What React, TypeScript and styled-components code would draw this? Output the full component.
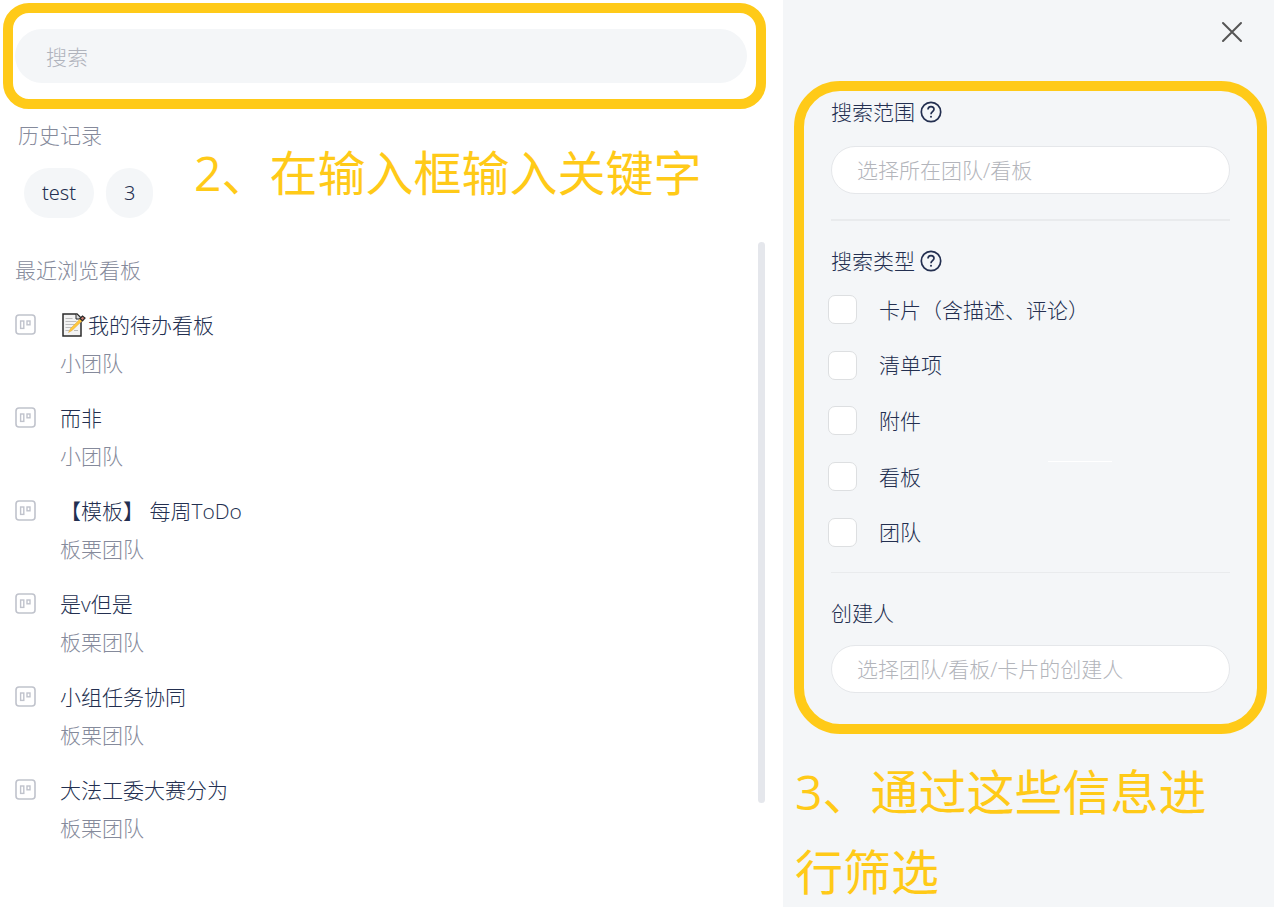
import React from "react";
import styled, { createGlobalStyle } from "styled-components";

const ink = "#232f50";
const muted = "#858a9b";
const surface = "#f4f6f8";
const accent = "#ffca18";

const GlobalStyle = createGlobalStyle`
  *, *::before, *::after { box-sizing: border-box; }
  body {
    margin: 0;
    background: #fff;
    color: ${ink};
    font-family: "Open Sans", "Noto Sans CJK SC", sans-serif;
    font-size: 21px;
    font-weight: 300;
    line-height: 30px;
  }
  button, input { font: inherit; color: inherit; }
`;

const Page = styled.div`
  display: grid;
  grid-template-columns: minmax(0, 1fr) 491px;
  min-height: calc(100vh - 3px);
  margin-bottom: 3px;
  overflow: hidden;
`;

const Main = styled.main`
  padding: 3px 17px 0 3px;
`;

const Aside = styled.aside`
  display: flex;
  flex-direction: column;
  padding: 16px 7px 0 11px;
  background: ${surface};
`;

const Highlight = styled.div<{ $radius: number; $padding: string }>`
  border: 10px solid ${accent};
  border-radius: ${(p) => p.$radius}px;
  padding: ${(p) => p.$padding};
`;

const SearchInput = styled.input`
  display: block;
  width: 100%;
  height: 54px;
  padding: 2px 31px 0;
  border: 0;
  border-radius: 27px;
  outline: none;
  background: ${surface};
  &::placeholder { color: #b0b3bc; opacity: 1; }
`;

const HistoryRow = styled.section`
  display: flex;
  padding: 11px 0 24px 15px;
`;

const History = styled.div`
  width: 176px;
  flex: none;
`;

const SectionTitle = styled.h2`
  margin: 0;
  font-size: 21px;
  font-weight: 300;
  color: ${muted};
`;

const Chips = styled.div`
  display: flex;
  gap: 12px;
  padding: 18px 0 0 6px;
`;

const Chip = styled.button`
  height: 50px;
  padding: 0 18px;
  border: 0;
  border-radius: 25px;
  background: ${surface};
  font-family: "Noto Sans", "Noto Sans CJK SC", sans-serif;
  font-size: 20px;
  cursor: pointer;
`;

const Note = styled.p<{ $margin: string }>`
  margin: ${(p) => p.$margin};
  color: ${accent};
  font-size: 48px;
  font-weight: 400;
  line-height: 80px;
`;

const Recent = styled.section`
  display: flex;
  justify-content: space-between;
  align-items: flex-start;
  padding: 0 1px 0 12px;
`;

const RecentBody = styled.div`
  padding-top: 13px;
`;

const BoardList = styled.ul`
  display: grid;
  gap: 17px;
  margin: 21px 0 0;
  padding: 0;
  list-style: none;
`;

const BoardLink = styled.a`
  display: grid;
  grid-template-columns: 21px 1fr;
  column-gap: 24px;
  line-height: 38px;
  color: ${ink};
  text-decoration: none;
  svg { display: block; }
`;

const IconCell = styled.span`
  padding-top: 8px;
`;

const BoardName = styled.span`
  display: flex;
  align-items: center;
`;

const TeamName = styled.span`
  grid-column: 2;
  color: ${muted};
`;

const ScrollThumb = styled.div`
  width: 7px;
  height: 561px;
  border-radius: 4px;
  background: #e5e7ec;
`;

const CloseButton = styled.button`
  align-self: flex-end;
  display: grid;
  place-items: center;
  width: 32px;
  height: 32px;
  margin: 0 19px 33px 0;
  padding: 0;
  border: 0;
  background: none;
  cursor: pointer;
`;

const FilterTitle = styled.div`
  display: flex;
  align-items: center;
  gap: 5px;
`;

const HelpButton = styled.button`
  display: block;
  padding: 0;
  border: 0;
  background: none;
  cursor: pointer;
  svg { display: block; }
`;

const FilterInput = styled.input`
  display: block;
  width: 100%;
  height: 48px;
  margin-top: ${(p) => (p.id === "scope" ? 19 : 17)}px;
  padding: 0 25px;
  border: 1px solid #e5e7ea;
  border-radius: 24px;
  outline: none;
  background: #fff;
  &::placeholder { color: #b3b5bb; opacity: 1; }
`;

const Divider = styled.hr<{ $margin: string; $size: number }>`
  height: ${(p) => p.$size}px;
  margin: ${(p) => p.$margin};
  border: 0;
  background: #e9ebed;
`;

const Options = styled.div`
  position: relative;
  display: grid;
  grid-auto-rows: 1fr;
  min-height: 278px;
  margin: 6px 0 0 -3px;
  &::after {
    content: "";
    position: absolute;
    top: 179px;
    right: 118px;
    width: 64px;
    height: 1px;
    background: #fff;
  }
`;

const Option = styled.label`
  display: flex;
  align-items: center;
  gap: 22px;
  cursor: pointer;
`;

const Checkbox = styled.input`
  appearance: none;
  width: 29px;
  height: 29px;
  margin: 0;
  border: 1px solid #dddfe1;
  border-radius: 7px;
  background: #fff;
  &:checked { background: ${accent}; }
`;

const BoardIcon = () => (
  <svg width="21" height="21" viewBox="0 0 21 21" fill="none" stroke="#c0c3cc">
    <rect x="1" y="1" width="19" height="19" rx="3" strokeWidth="1.6" />
    <rect x="5.600" y="7" width="3.200" height="7.400" strokeWidth="1.4" />
    <rect x="12" y="7" width="3" height="3.800" strokeWidth="1.4" />
  </svg>
);

const MemoIcon = () => (
  <svg width="28" height="28" viewBox="0 0 28 28" aria-label="memo">
    <path d="M3 3h14l4 4v18H3z" fill="#f3f3f3" stroke="#2b2b2b" strokeWidth="1.5" />
    <path d="M16 3v5h5" fill="#ddd" stroke="#2b2b2b" />
    <path d="M5.500 7.500h7M5.500 10.500h11M5.500 13.500h10M5.500 16.500h7M5.500 19.500h4M14 19.500h4" stroke="#bdbdbd" />
    <path d="M8.500 21.500l2-4L20.500 7.500l2 2L12 19.500z" fill="#ffc83d" stroke="#d9a441" strokeWidth=".5" />
    <path d="M20 7.500l2.500-2.500 2.500 2-2.500 2.800z" fill="#d67d6e" stroke="#2b2b2b" strokeWidth="1.2" />
  </svg>
);

const HelpIcon = () => (
  <svg width="22" height="22" viewBox="0 0 22 22" fill="none" stroke={ink} strokeWidth="1.7">
    <circle cx="11" cy="11" r="9.700" />
    <path d="M8 8.600c0-1.900 1.300-3 3-3s3 1.100 3 2.700c0 2.200-3 2.500-3 4.900" />
    <circle cx="11" cy="15.700" r="1" fill={ink} stroke="none" />
  </svg>
);

const boards = [
  { name: "我的待办看板", team: "小团队", memo: true },
  { name: "而非", team: "小团队" },
  { name: "【模板】 每周ToDo", team: "板栗团队" },
  { name: "是v但是", team: "板栗团队" },
  { name: "小组任务协同", team: "板栗团队" },
  { name: "大法工委大赛分为", team: "板栗团队" },
];

const types = ["卡片（含描述、评论）", "清单项", "附件", "看板", "团队"];

export default function App() {
  return (
    <>
      <GlobalStyle />
      <Page lang="zh-CN">
        <Main>
          <Highlight $radius={26} $padding="16px 9px 16px 2px">
            <SearchInput type="text" placeholder="搜索" aria-label="搜索" />
          </Highlight>
          <HistoryRow>
            <History>
              <SectionTitle>历史记录</SectionTitle>
              <Chips>
                <Chip type="button">test</Chip>
                <Chip type="button">3</Chip>
              </Chips>
            </History>
            <Note $margin="13px 0 -10px">2、在输入框输入关键字</Note>
          </HistoryRow>
          <Recent>
            <RecentBody>
              <SectionTitle>最近浏览看板</SectionTitle>
              <BoardList>
                {boards.map((b) => (
                  <li key={b.name}>
                    <BoardLink href="#">
                      <IconCell><BoardIcon /></IconCell>
                      <BoardName>{b.memo && <MemoIcon />}{b.name}</BoardName>
                      <TeamName>{b.team}</TeamName>
                    </BoardLink>
                  </li>
                ))}
              </BoardList>
            </RecentBody>
            <ScrollThumb />
          </Recent>
        </Main>
        <Aside>
          <CloseButton type="button" aria-label="关闭">
            <svg width="22" height="22" viewBox="0 0 22 22" stroke="#555" strokeWidth="2" strokeLinecap="round">
              <path d="M2 2l18 18M20 2L2 20" />
            </svg>
          </CloseButton>
          <Highlight $radius={46} $padding="6px 27px 31px">
            <FilterTitle>
              <label htmlFor="scope">搜索范围</label>
              <HelpButton type="button" aria-label="搜索范围说明"><HelpIcon /></HelpButton>
            </FilterTitle>
            <FilterInput id="scope" type="text" placeholder="选择所在团队/看板" />
            <Divider $size={2} $margin="25px 0" />
            <FilterTitle>
              <span id="types">搜索类型</span>
              <HelpButton type="button" aria-label="搜索类型说明"><HelpIcon /></HelpButton>
            </FilterTitle>
            <Options role="group" aria-labelledby="types">
              {types.map((t) => (
                <Option key={t}>
                  <Checkbox type="checkbox" />
                  {t}
                </Option>
              ))}
            </Options>
            <Divider $size={1} $margin="12px 0 25px" />
            <FilterTitle>
              <label htmlFor="creator">创建人</label>
            </FilterTitle>
            <FilterInput id="creator" type="text" placeholder="选择团队/看板/卡片的创建人" />
          </Highlight>
          <Note $margin="18px 32px -8px 1px">3、通过这些信息进行筛选</Note>
        </Aside>
      </Page>
    </>
  );
}
